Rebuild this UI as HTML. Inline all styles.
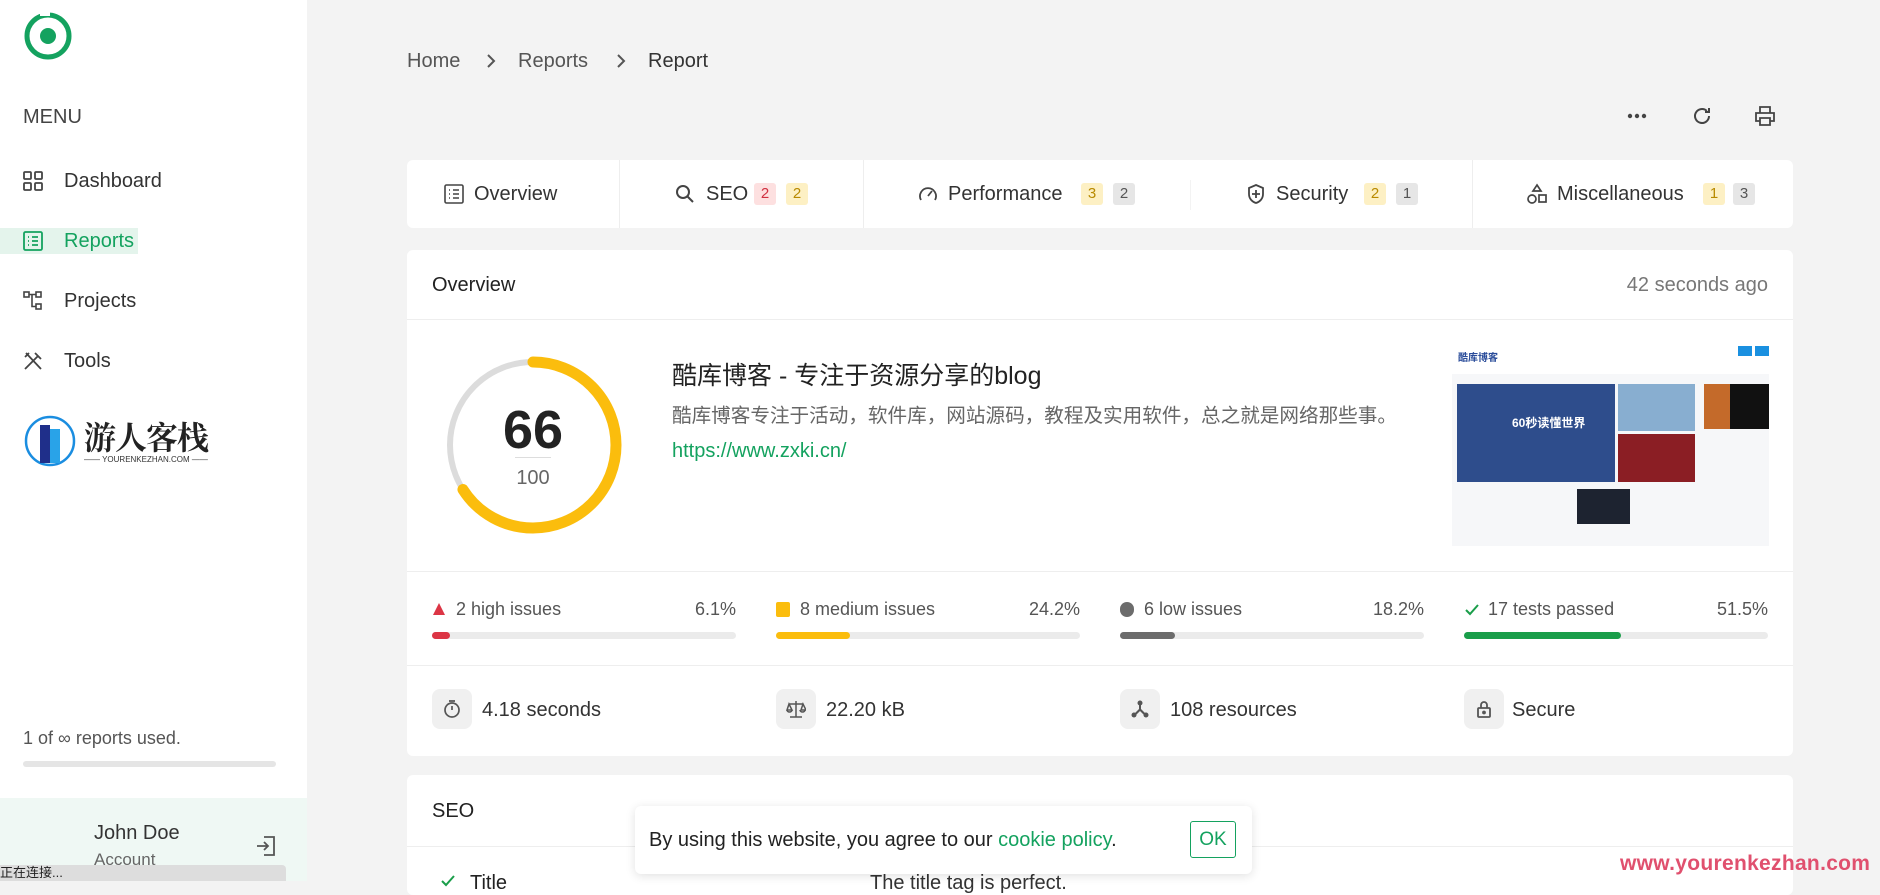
<!DOCTYPE html>
<html><head><meta charset="utf-8"><style>
*{box-sizing:border-box;margin:0;padding:0}
body{width:1880px;height:881px;overflow:hidden;background:#f3f3f3;font-family:"Liberation Sans","Noto Sans CJK SC",sans-serif;color:#222;position:relative}
.a{position:absolute;white-space:nowrap}
.side{position:absolute;left:0;top:0;width:307px;height:881px;background:#fff}
.nav{font-size:20px;color:#333}
.card{position:absolute;background:#fff;border-radius:6px}
.badge{display:inline-block;width:22px;height:22px;line-height:22px;text-align:center;font-size:15px;border-radius:3px;vertical-align:middle}
.by{background:#fdf0c4;color:#b88a00}.br{background:#fde0e0;color:#d03040}.bg{background:#e6e6e6;color:#555}
.tab{font-size:20px;color:#333;top:183px}
.bar{position:absolute;height:7px;border-radius:4px;background:#ebebeb;top:632px;width:304px}
.bar i{display:block;height:7px;border-radius:4px}
.iss{top:599px;font-size:18px;color:#555}
.box{position:absolute;top:689px;width:40px;height:40px;border-radius:8px;background:#f0f0f0}
.st{top:699px;font-size:20px;color:#333}
</style></head><body>
<div class="side"></div>
<svg class="a" style="left:22px;top:10px" width="52" height="52" viewBox="0 0 52 52"><circle cx="26" cy="26" r="21" fill="none" stroke="#14a25f" stroke-width="5"/><circle cx="26" cy="26" r="8" fill="#14a25f"/><rect x="18" y="0" width="10" height="6" fill="#fff"/></svg>
<div class="a" style="left:23px;top:106px;font-size:20px;color:#444">MENU</div>
<svg class="a" style="left:23px;top:171px" width="20" height="20" viewBox="0 0 20 20" fill="none" stroke="#444" stroke-width="1.8"><rect x="1" y="1" width="7" height="7" rx="1"/><rect x="12" y="1" width="7" height="7" rx="1"/><rect x="1" y="12" width="7" height="7" rx="1"/><rect x="12" y="12" width="7" height="7" rx="1"/></svg>
<div class="a nav" style="left:64px;top:170px">Dashboard</div>
<div class="a" style="left:0;top:228px;width:138px;height:26px;background:#e4f4ec"></div>
<svg class="a" style="left:23px;top:231px" width="20" height="20" viewBox="0 0 20 20" fill="none" stroke="#14a25f" stroke-width="1.8"><rect x="1" y="1" width="18" height="18" rx="1.5"/><path d="M5 6h1M9 6h6M5 10h1M9 10h6M5 14h1M9 14h6"/></svg>
<div class="a nav" style="left:64px;top:230px;color:#14a25f">Reports</div>
<svg class="a" style="left:23px;top:291px" width="20" height="20" viewBox="0 0 20 20" fill="none" stroke="#444" stroke-width="1.6"><rect x="1" y="1" width="5" height="5"/><rect x="13" y="1" width="5" height="5"/><rect x="13" y="13" width="5" height="5"/><path d="M6 3.5h7M9 3.5v12h4"/></svg>
<div class="a nav" style="left:64px;top:290px">Projects</div>
<svg class="a" style="left:23px;top:351px" width="20" height="20" viewBox="0 0 20 20" fill="none" stroke="#444" stroke-width="1.8"><path d="M2 18L15 5M12 2l6 6M3 2l15 16M2 6l4-4"/></svg>
<div class="a nav" style="left:64px;top:350px">Tools</div>
<svg class="a" style="left:24px;top:415px" width="56" height="56" viewBox="0 0 56 56"><circle cx="26" cy="26" r="24" fill="none" stroke="#1a8de0" stroke-width="2.5"/><rect x="16" y="10" width="10" height="38" fill="#1f2f8a"/><rect x="26" y="14" width="10" height="34" fill="#29a3e8"/></svg>
<div class="a" style="left:84px;top:413px;font-size:32px;font-weight:bold;font-family:'Noto Serif CJK SC',serif;color:#222;letter-spacing:-1px">游人客栈</div>
<div class="a" style="left:84px;top:455px;font-size:8px;color:#333">—— YOURENKEZHAN.COM ——</div>
<div class="a" style="left:23px;top:728px;font-size:18px;color:#555">1 of ∞ reports used.</div>
<div class="a" style="left:23px;top:761px;width:253px;height:6px;border-radius:3px;background:#e5e5e5"></div>
<div class="a" style="left:0;top:798px;width:307px;height:83px;background:#eff8f4"></div>
<div class="a" style="left:94px;top:822px;font-size:20px;color:#333">John Doe</div>
<div class="a" style="left:94px;top:850px;font-size:17px;color:#666">Account</div>
<svg class="a" style="left:255px;top:835px" width="22" height="22" viewBox="0 0 22 22" fill="none" stroke="#555" stroke-width="1.8"><path d="M9 2h10v18H9M2 11h11M9 7l4 4-4 4"/></svg>
<div class="a" style="left:0;top:865px;width:286px;height:16px;background:#ddd;border-radius:0 4px 0 0;font-size:13px;color:#222;line-height:16px">正在连接...</div>

<div class="a" style="left:407px;top:50px;font-size:20px;color:#555">Home</div>
<svg class="a" style="left:486px;top:53px" width="10" height="16" viewBox="0 0 10 16" fill="none" stroke="#555" stroke-width="2"><path d="M2 2l6 6-6 6"/></svg>
<div class="a" style="left:518px;top:50px;font-size:20px;color:#555">Reports</div>
<svg class="a" style="left:616px;top:53px" width="10" height="16" viewBox="0 0 10 16" fill="none" stroke="#555" stroke-width="2"><path d="M2 2l6 6-6 6"/></svg>
<div class="a" style="left:648px;top:50px;font-size:20px;color:#333">Report</div>
<svg class="a" style="left:1626px;top:106px" width="22" height="20"><circle cx="4" cy="10" r="2.2" fill="#444"/><circle cx="11" cy="10" r="2.2" fill="#444"/><circle cx="18" cy="10" r="2.2" fill="#444"/></svg>
<svg class="a" style="left:1691px;top:105px" width="22" height="22" viewBox="0 0 22 22" fill="none" stroke="#444" stroke-width="2"><path d="M18 11a7 7 0 1 1-2.2-5.1M18 3v4h-4"/></svg>
<svg class="a" style="left:1754px;top:105px" width="22" height="22" viewBox="0 0 22 22" fill="none" stroke="#444" stroke-width="1.8"><path d="M6 8V2h10v6M6 16H2V8h18v8h-4M6 13h10v7H6z"/></svg>

<div class="card" style="left:407px;top:160px;width:1386px;height:68px"></div>
<div class="a" style="left:619px;top:160px;width:1px;height:68px;background:#eee"></div>
<div class="a" style="left:863px;top:160px;width:1px;height:68px;background:#eee"></div>
<div class="a" style="left:1190px;top:180px;width:1px;height:30px;background:#f3f3f3"></div>
<div class="a" style="left:1472px;top:160px;width:1px;height:68px;background:#eee"></div>
<svg class="a" style="left:444px;top:184px" width="20" height="20" viewBox="0 0 20 20" fill="none" stroke="#444" stroke-width="1.6"><rect x="1" y="1" width="18" height="18" rx="1.5"/><path d="M5 6h1M9 6h6M5 10h1M9 10h6M5 14h1M9 14h6"/></svg>
<div class="a tab" style="left:474px">Overview</div>
<svg class="a" style="left:674px;top:183px" width="22" height="22" viewBox="0 0 22 22" fill="none" stroke="#444" stroke-width="2"><circle cx="9" cy="9" r="6"/><path d="M13.5 13.5L19 19"/></svg>
<div class="a tab" style="left:706px">SEO</div>
<span class="a badge br" style="left:754px;top:183px">2</span><span class="a badge by" style="left:786px;top:183px">2</span>
<svg class="a" style="left:918px;top:184px" width="20" height="20" viewBox="0 0 20 20" fill="none" stroke="#444" stroke-width="1.8"><path d="M3 16a8 8 0 1 1 14 0M10 12l4-5"/></svg>
<div class="a tab" style="left:948px">Performance</div>
<span class="a badge by" style="left:1081px;top:183px">3</span><span class="a badge bg" style="left:1113px;top:183px">2</span>
<svg class="a" style="left:1246px;top:183px" width="20" height="22" viewBox="0 0 20 22" fill="none" stroke="#444" stroke-width="1.8"><path d="M10 2l7 3v6c0 5-3.5 8-7 9-3.5-1-7-4-7-9V5z"/><path d="M10 7v8M6 11h8" /></svg>
<div class="a tab" style="left:1276px">Security</div>
<span class="a badge by" style="left:1364px;top:183px">2</span><span class="a badge bg" style="left:1396px;top:183px">1</span>
<svg class="a" style="left:1526px;top:183px" width="22" height="22" viewBox="0 0 22 22" fill="none" stroke="#444" stroke-width="1.7"><path d="M11 2l4 6H7z"/><circle cx="6" cy="16" r="4"/><rect x="13" y="12" width="7" height="7"/></svg>
<div class="a tab" style="left:1557px">Miscellaneous</div>
<span class="a badge by" style="left:1703px;top:183px">1</span><span class="a badge bg" style="left:1733px;top:183px">3</span>

<div class="card" style="left:407px;top:250px;width:1386px;height:506px"></div>
<div class="a" style="left:432px;top:274px;font-size:20px;color:#222">Overview</div>
<div class="a" style="left:1597px;top:274px;font-size:20px;color:#777;width:171px;text-align:right">42 seconds ago</div>
<div class="a" style="left:407px;top:319px;width:1386px;height:1px;background:#eee"></div>
<svg class="a" style="left:441px;top:353px" width="184" height="184" viewBox="0 0 184 184"><circle cx="92" cy="92" r="83" fill="none" stroke="#dcdcdc" stroke-width="6"/><circle cx="92" cy="92" r="83" fill="none" stroke="#fbbd0d" stroke-width="11" stroke-linecap="round" stroke-dasharray="344 1000" transform="rotate(-90 92 92)"/></svg>
<div class="a" style="left:483px;top:399px;width:100px;text-align:center;font-size:54px;font-weight:bold;color:#222">66</div>
<div class="a" style="left:515px;top:457px;width:36px;height:1px;background:#ddd"></div>
<div class="a" style="left:483px;top:467px;width:100px;text-align:center;font-size:20px;color:#666">100</div>
<div class="a" style="left:672px;top:356px;font-size:25px;color:#222">酷库博客 - 专注于资源分享的blog</div>
<div class="a" style="left:672px;top:399px;font-size:19.6px;color:#666">酷库博客专注于活动，软件库，网站源码，教程及实用软件，总之就是网络那些事。</div>
<div class="a" style="left:672px;top:440px;font-size:20px;color:#14a25f">https://www.zxki.cn/</div>
<div class="a" style="left:1452px;top:344px;width:317px;height:202px;background:#f6f7f9">
 <div class="a" style="left:0;top:0;width:317px;height:30px;background:#fff"></div>
 <div class="a" style="left:6px;top:5px;font-size:10px;color:#2a4c9a;font-weight:bold">酷库博客</div>
 <div class="a" style="left:286px;top:2px;width:14px;height:10px;background:#1a90e0"></div><div class="a" style="left:303px;top:2px;width:14px;height:10px;background:#1a90e0"></div>
 <div class="a" style="left:5px;top:40px;width:158px;height:98px;background:#2e4d8c"></div>
 <div class="a" style="left:60px;top:70px;font-size:12px;color:#fff;font-weight:bold">60秒读懂世界</div>
 <div class="a" style="left:166px;top:40px;width:77px;height:47px;background:#88aed0"></div>
 <div class="a" style="left:166px;top:90px;width:77px;height:48px;background:#8b1e24"></div>
 <div class="a" style="left:252px;top:40px;width:65px;height:45px;background:#c46a2a"></div>
 <div class="a" style="left:278px;top:40px;width:39px;height:45px;background:#111"></div>
 <div class="a" style="left:125px;top:145px;width:53px;height:35px;background:#1d2330"></div>
</div>
<div class="a" style="left:407px;top:571px;width:1386px;height:1px;background:#eee"></div>
<svg class="a" style="left:432px;top:602px" width="14" height="14"><path d="M7 1L13 13H1z" fill="#dc3545"/></svg>
<div class="a iss" style="left:456px">2 high issues</div><div class="a iss" style="left:680px;width:56px;text-align:right">6.1%</div>
<div class="bar" style="left:432px"><i style="width:18px;background:#dc3545"></i></div>
<div class="a" style="left:776px;top:602px;width:14px;height:15px;border-radius:2px;background:#fbbd0d"></div>
<div class="a iss" style="left:800px">8 medium issues</div><div class="a iss" style="left:1010px;width:70px;text-align:right">24.2%</div>
<div class="bar" style="left:776px"><i style="width:74px;background:#fbbd0d"></i></div>
<div class="a" style="left:1120px;top:602px;width:14px;height:15px;border-radius:7px;background:#6c6c6c"></div>
<div class="a iss" style="left:1144px">6 low issues</div><div class="a iss" style="left:1354px;width:70px;text-align:right">18.2%</div>
<div class="bar" style="left:1120px"><i style="width:55px;background:#6c6c6c"></i></div>
<svg class="a" style="left:1464px;top:602px" width="16" height="16" viewBox="0 0 16 16" fill="none" stroke="#1a9e4a" stroke-width="2"><path d="M2 8l4 4 8-9"/></svg>
<div class="a iss" style="left:1488px">17 tests passed</div><div class="a iss" style="left:1698px;width:70px;text-align:right">51.5%</div>
<div class="bar" style="left:1464px"><i style="width:157px;background:#1a9e4a"></i></div>
<div class="a" style="left:407px;top:665px;width:1386px;height:1px;background:#eee"></div>
<div class="box" style="left:432px"></div><svg class="a" style="left:442px;top:699px" width="20" height="20" viewBox="0 0 20 20" fill="none" stroke="#555" stroke-width="1.7"><circle cx="10" cy="11" r="7"/><path d="M7 2h6M10 11V7"/></svg>
<div class="a st" style="left:482px">4.18 seconds</div>
<div class="box" style="left:776px"></div><svg class="a" style="left:786px;top:699px" width="20" height="20" viewBox="0 0 20 20" fill="none" stroke="#555" stroke-width="1.5"><path d="M10 2v16M4 18h12M3 5h14M3 5l-2 6h5zM17 5l-2 6h5zM1 11a2.5 2 0 0 0 5 0M14 11a2.5 2 0 0 0 5 0"/></svg>
<div class="a st" style="left:826px">22.20 kB</div>
<div class="box" style="left:1120px"></div><svg class="a" style="left:1130px;top:699px" width="20" height="20" viewBox="0 0 20 20" fill="#555"><circle cx="10" cy="4" r="2.5"/><circle cx="4" cy="16" r="2.5"/><circle cx="16" cy="16" r="2.5"/><path d="M9 5h2v5l5 5-1.5 1.5L10 12l-4.5 4.5L4 15l5-5z"/></svg>
<div class="a st" style="left:1170px">108 resources</div>
<div class="box" style="left:1464px"></div><svg class="a" style="left:1474px;top:699px" width="20" height="20" viewBox="0 0 20 20" fill="none" stroke="#555" stroke-width="1.8"><rect x="4" y="9" width="12" height="9" rx="1"/><path d="M7 9V6a3 3 0 0 1 6 0v3"/><circle cx="10" cy="13.5" r="1" fill="#555"/></svg>
<div class="a st" style="left:1512px">Secure</div>

<div class="card" style="left:407px;top:775px;width:1386px;height:120px"></div>
<div class="a" style="left:432px;top:800px;font-size:20px;color:#222">SEO</div>
<div class="a" style="left:407px;top:846px;width:1386px;height:1px;background:#eee"></div>
<svg class="a" style="left:440px;top:873px" width="16" height="16" viewBox="0 0 16 16" fill="none" stroke="#1a9e4a" stroke-width="2"><path d="M2 8l4 4 8-9"/></svg>
<div class="a" style="left:470px;top:872px;font-size:20px;color:#222">Title</div>
<div class="a" style="left:870px;top:872px;font-size:20px;color:#333">The title tag is perfect.</div>

<div class="a" style="left:635px;top:806px;width:617px;height:68px;background:#fff;border-radius:6px;box-shadow:0 2px 10px rgba(0,0,0,.12)"></div>
<div class="a" style="left:649px;top:829px;font-size:20px;color:#222">By using this website, you agree to our <span style="color:#14a25f">cookie policy</span>.</div>
<div class="a" style="left:1190px;top:821px;width:46px;height:37px;border:1px solid #14a25f;border-radius:3px;color:#14a25f;font-size:19px;text-align:center;line-height:35px">OK</div>
<div class="a" style="left:1620px;top:852px;font-size:21px;font-weight:bold;color:#e0506e;letter-spacing:0.3px">www.yourenkezhan.com</div>
</body></html>
